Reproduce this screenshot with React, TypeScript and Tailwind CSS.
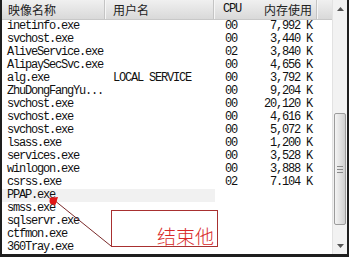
import React from 'react';

type Row = { name: string; user?: string; cpu: string; mem: string; hl?: boolean };

const rows: Row[] = [
    { name: 'inetinfo.exe', cpu: '00', mem: '7,992 K' },
    { name: 'svchost.exe', cpu: '00', mem: '3,440 K' },
    { name: 'AliveService.exe', cpu: '02', mem: '3,840 K' },
    { name: 'AlipaySecSvc.exe', cpu: '00', mem: '4,656 K' },
    { name: 'alg.exe', user: 'LOCAL SERVICE', cpu: '00', mem: '3,792 K' },
    { name: 'ZhuDongFangYu...', cpu: '00', mem: '9,204 K' },
    { name: 'svchost.exe', cpu: '00', mem: '20,120 K' },
    { name: 'svchost.exe', cpu: '00', mem: '4,616 K' },
    { name: 'svchost.exe', cpu: '00', mem: '5,072 K' },
    { name: 'lsass.exe', cpu: '00', mem: '1,200 K' },
    { name: 'services.exe', cpu: '00', mem: '3,528 K' },
    { name: 'winlogon.exe', cpu: '00', mem: '3,888 K' },
    { name: 'csrss.exe', cpu: '02', mem: '7.104 K' },
    { name: 'PPAP.exe', cpu: '', mem: '', hl: true },
    { name: 'smss.exe', cpu: '', mem: '' },
    { name: 'sqlservr.exe', cpu: '', mem: '' },
    { name: 'ctfmon.exe', cpu: '', mem: '' },
    { name: '360Tray.exe', cpu: '', mem: '' },
];

const mono = "font-['Liberation_Mono','DejaVu_Sans_Mono',monospace] text-[12px] tracking-[-1.2px] leading-[13px] text-[#111]";
const cjk = "font-['Noto_Sans_CJK_SC','Noto_Sans',sans-serif]";

function Divider() {
    return <div className="w-[2px] h-full border-l border-[#c4c4c4] border-r border-r-[#f6f6f6]" />;
}

function ScrollBar() {
    return (
        <div className="w-[15px] h-full flex flex-col bg-[#f2f2f2] border-l border-[#e2e2e2]">
            <div className="h-[17px] flex items-center justify-center">
                <svg width="7" height="4" viewBox="0 0 7 4"><path d="M0 4 L3.5 0 L7 4 Z" fill="#555" /></svg>
            </div>
            <div className="flex-1 flex flex-col">
                <div className="h-[96px]" />
                <div className="h-[112px] mx-[1px] rounded-[2px] border border-[#9c9c9c] bg-gradient-to-r from-[#f4f4f4] via-[#e2e2e2] to-[#cfcfcf] flex items-center justify-center">
                    <div className="flex flex-col gap-[2px]">
                        <div className="w-[6px] h-px bg-[#8a8a8a]" />
                        <div className="w-[6px] h-px bg-[#8a8a8a]" />
                        <div className="w-[6px] h-px bg-[#8a8a8a]" />
                    </div>
                </div>
                <div className="flex-1" />
            </div>
            <div className="h-[17px] flex items-center justify-center">
                <svg width="7" height="4" viewBox="0 0 7 4"><path d="M0 0 L3.5 4 L7 0 Z" fill="#555" /></svg>
            </div>
        </div>
    );
}

export default function App() {
    return (
        <div className="relative w-[349px] h-[257px] bg-white overflow-hidden border-l-2 border-r-2 border-b-[3px] border-[#1e1e1e] flex">
            <div className="w-[330px] flex flex-col">
                {/* cabecera */}
                <div className="h-[20px] flex items-stretch bg-gradient-to-b from-[#f0f0f0] to-[#d9d9d9] border-b border-[#c8c8c8] text-[#222]">
                    <div className={`w-[102px] pl-[6px] flex items-center text-[12px] ${cjk}`}>映像名称</div>
                    <Divider />
                    <div className={`w-[107px] pl-[7px] flex items-center text-[12px] ${cjk}`}>用户名</div>
                    <Divider />
                    <div className={`w-[40px] pl-[8px] flex items-center ${mono}`}>CPU</div>
                    <div className={`w-[61px] pr-[4px] flex items-center justify-end text-[12px] ${cjk}`}>内存使用</div>
                    <Divider />
                    <div className="flex-1" />
                </div>
                {/* filas */}
                <div className="flex flex-col">
                    {rows.map((r, i) => (
                        <div key={i} className={`h-[13px] flex ${mono}`}>
                            <div className={`w-[104px] pl-[5px] whitespace-nowrap ${r.hl ? 'bg-[#f1f1f1]' : ''}`}>{r.name}</div>
                            <div className={`w-[109px] pl-[7px] whitespace-nowrap ${r.hl ? 'bg-[#f1f1f1]' : ''}`}>{r.user ?? ''}</div>
                            <div className="w-[40px] pl-[10px]">{r.cpu}</div>
                            <div className="w-[63px] pr-[6px] text-right whitespace-nowrap">{r.mem}</div>
                        </div>
                    ))}
                </div>
            </div>
            <ScrollBar />

            {/* anotación */}
            <svg className="absolute left-0 top-0 pointer-events-none" width="349" height="257">
                <line x1="52" y1="200" x2="109" y2="246" stroke="#7a2a2a" strokeWidth="1" />
                <path d="M47 198 L56 197 L53 206 Z" fill="#e01818" />
                <circle cx="51" cy="201" r="3.5" fill="#e01818" />
            </svg>
            <div className="absolute left-[109px] top-[210px] w-[107px] h-[37px] bg-white border border-[#a83030] flex items-end justify-end pr-[3px]">
                <span className={`text-[19px] leading-[20px] font-light text-[#d82828] ${cjk}`}>结束他</span>
            </div>
        </div>
    );
}
